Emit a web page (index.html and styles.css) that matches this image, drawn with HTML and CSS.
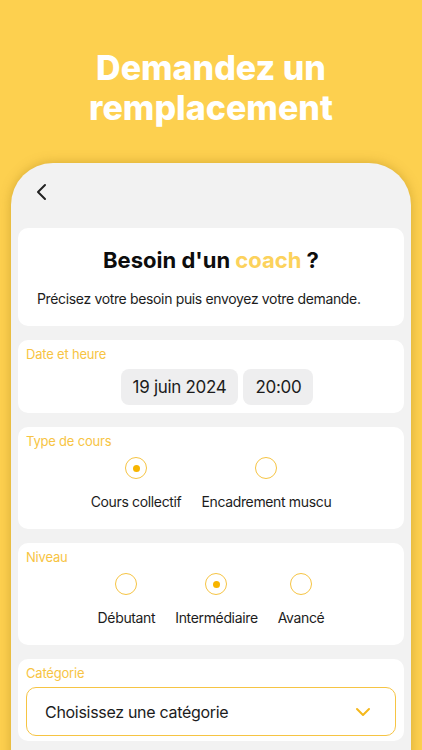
FILE: index.html
```html
<!DOCTYPE html>
<html lang="fr">
<head>
  <meta charset="UTF-8" />
  <title>Demandez un remplacement</title>
  <link rel="stylesheet" href="styles.css">
</head>
<body>

  <h1 class="hero">Demandez un<br>remplacement</h1>

  <div class="phone">
    <div class="topbar">
      <svg class="back" width="14" height="18" viewBox="0 0 14 18">
        <path d="M10 2 L3 9 L10 16" fill="none" stroke="#222" stroke-width="2" stroke-linecap="round" stroke-linejoin="round"/>
      </svg>
    </div>

    <div class="content">
      <div class="card intro">
        <h2>Besoin d'un <span class="accent">coach</span> ?</h2>
        <p>Précisez votre besoin puis envoyez votre demande.</p>
      </div>

      <div class="card">
        <div class="label">Date et heure</div>
        <div class="pills">
          <span class="pill">19 juin 2024</span>
          <span class="pill">20:00</span>
        </div>
      </div>

      <div class="card">
        <div class="label">Type de cours</div>
        <div class="options">
          <div class="option">
            <span class="radio checked"></span>
            <span>Cours collectif</span>
          </div>
          <div class="option">
            <span class="radio"></span>
            <span>Encadrement muscu</span>
          </div>
        </div>
      </div>

      <div class="card">
        <div class="label">Niveau</div>
        <div class="options">
          <div class="option">
            <span class="radio"></span>
            <span>Débutant</span>
          </div>
          <div class="option">
            <span class="radio checked"></span>
            <span>Intermédiaire</span>
          </div>
          <div class="option">
            <span class="radio"></span>
            <span>Avancé</span>
          </div>
        </div>
      </div>

      <div class="card">
        <div class="label">Catégorie</div>
        <div class="select">
          <span>Choisissez une catégorie</span>
          <svg width="16" height="10" viewBox="0 0 16 10">
            <path d="M2 2 L8 8 L14 2" fill="none" stroke="#F5B81C" stroke-width="2" stroke-linecap="round" stroke-linejoin="round"/>
          </svg>
        </div>
      </div>
    </div>
  </div>

</body>
</html>
```

FILE: styles.css
```css
body {
  margin: 0;
  height: 750px;
  overflow: hidden;
  background: #fdd04f;
  font-family: Inter, "Noto Sans", sans-serif;
  color: #1c1c1c;
}
.hero {
  margin: 0;
  padding: 48px 0 35px;
  text-align: center;
  color: #fff;
  font-size: 34px;
  line-height: 40px;
  font-weight: 800;
}
.phone {
  margin: 0 11px;
  height: 620px;
  background: #f2f2f2;
  border-radius: 42px 42px 0 0;
  box-shadow: 0 0 12px rgba(140, 100, 0, 0.35);
}
.topbar {
  height: 65px;
  padding-left: 24px;
  display: flex;
  align-items: center;
}
.back {
  margin-top: -7px;
}
.content {
  padding: 0 7px;
  display: flex;
  flex-direction: column;
  gap: 14px;
}
.card {
  background: #fff;
  border-radius: 10px;
  padding: 6px 8px 18px;
}
.intro {
  padding: 18px 19px;
}
.intro h2 {
  margin: 0 0 16px;
  text-align: center;
  font-size: 22px;
  line-height: 28px;
  font-weight: 700;
  color: #0d0d0d;
}
.accent {
  color: #fcd25c;
}
.intro p {
  margin: 0;
  font-size: 14px;
  line-height: 18px;
  letter-spacing: -0.35px;
}
.label {
  font-size: 13px;
  line-height: 16px;
  color: #f7c443;
  letter-spacing: -0.2px;
}
.pills {
  display: flex;
  justify-content: center;
  gap: 5px;
  margin-top: 7px;
  margin-bottom: -10px;
  padding-left: 12px;
}
.pill {
  background: #eeeeef;
  border-radius: 8px;
  height: 36px;
  padding: 0 12px;
  display: flex;
  align-items: center;
  font-size: 17px;
  letter-spacing: -0.3px;
}
.options {
  display: flex;
  justify-content: center;
  gap: 20px;
  margin-top: 8px;
}
.option {
  display: flex;
  flex-direction: column;
  align-items: center;
  gap: 14px;
  font-size: 14px;
  line-height: 18px;
  letter-spacing: -0.35px;
}
.radio {
  width: 22px;
  height: 22px;
  box-sizing: border-box;
  border: 1.5px solid #f6c443;
  border-radius: 50%;
  display: flex;
  align-items: center;
  justify-content: center;
}
.radio.checked::after {
  content: "";
  width: 7px;
  height: 7px;
  border-radius: 50%;
  background: #f7b500;
}
.card:last-child {
  padding-bottom: 5px;
}
.select {
  margin-top: 6px;
  height: 49px;
  box-sizing: border-box;
  border: 1px solid #f6c443;
  border-radius: 10px;
  display: flex;
  align-items: center;
  justify-content: space-between;
  padding: 0 24px 0 18px;
  font-size: 16px;
  letter-spacing: -0.3px;
}
```
